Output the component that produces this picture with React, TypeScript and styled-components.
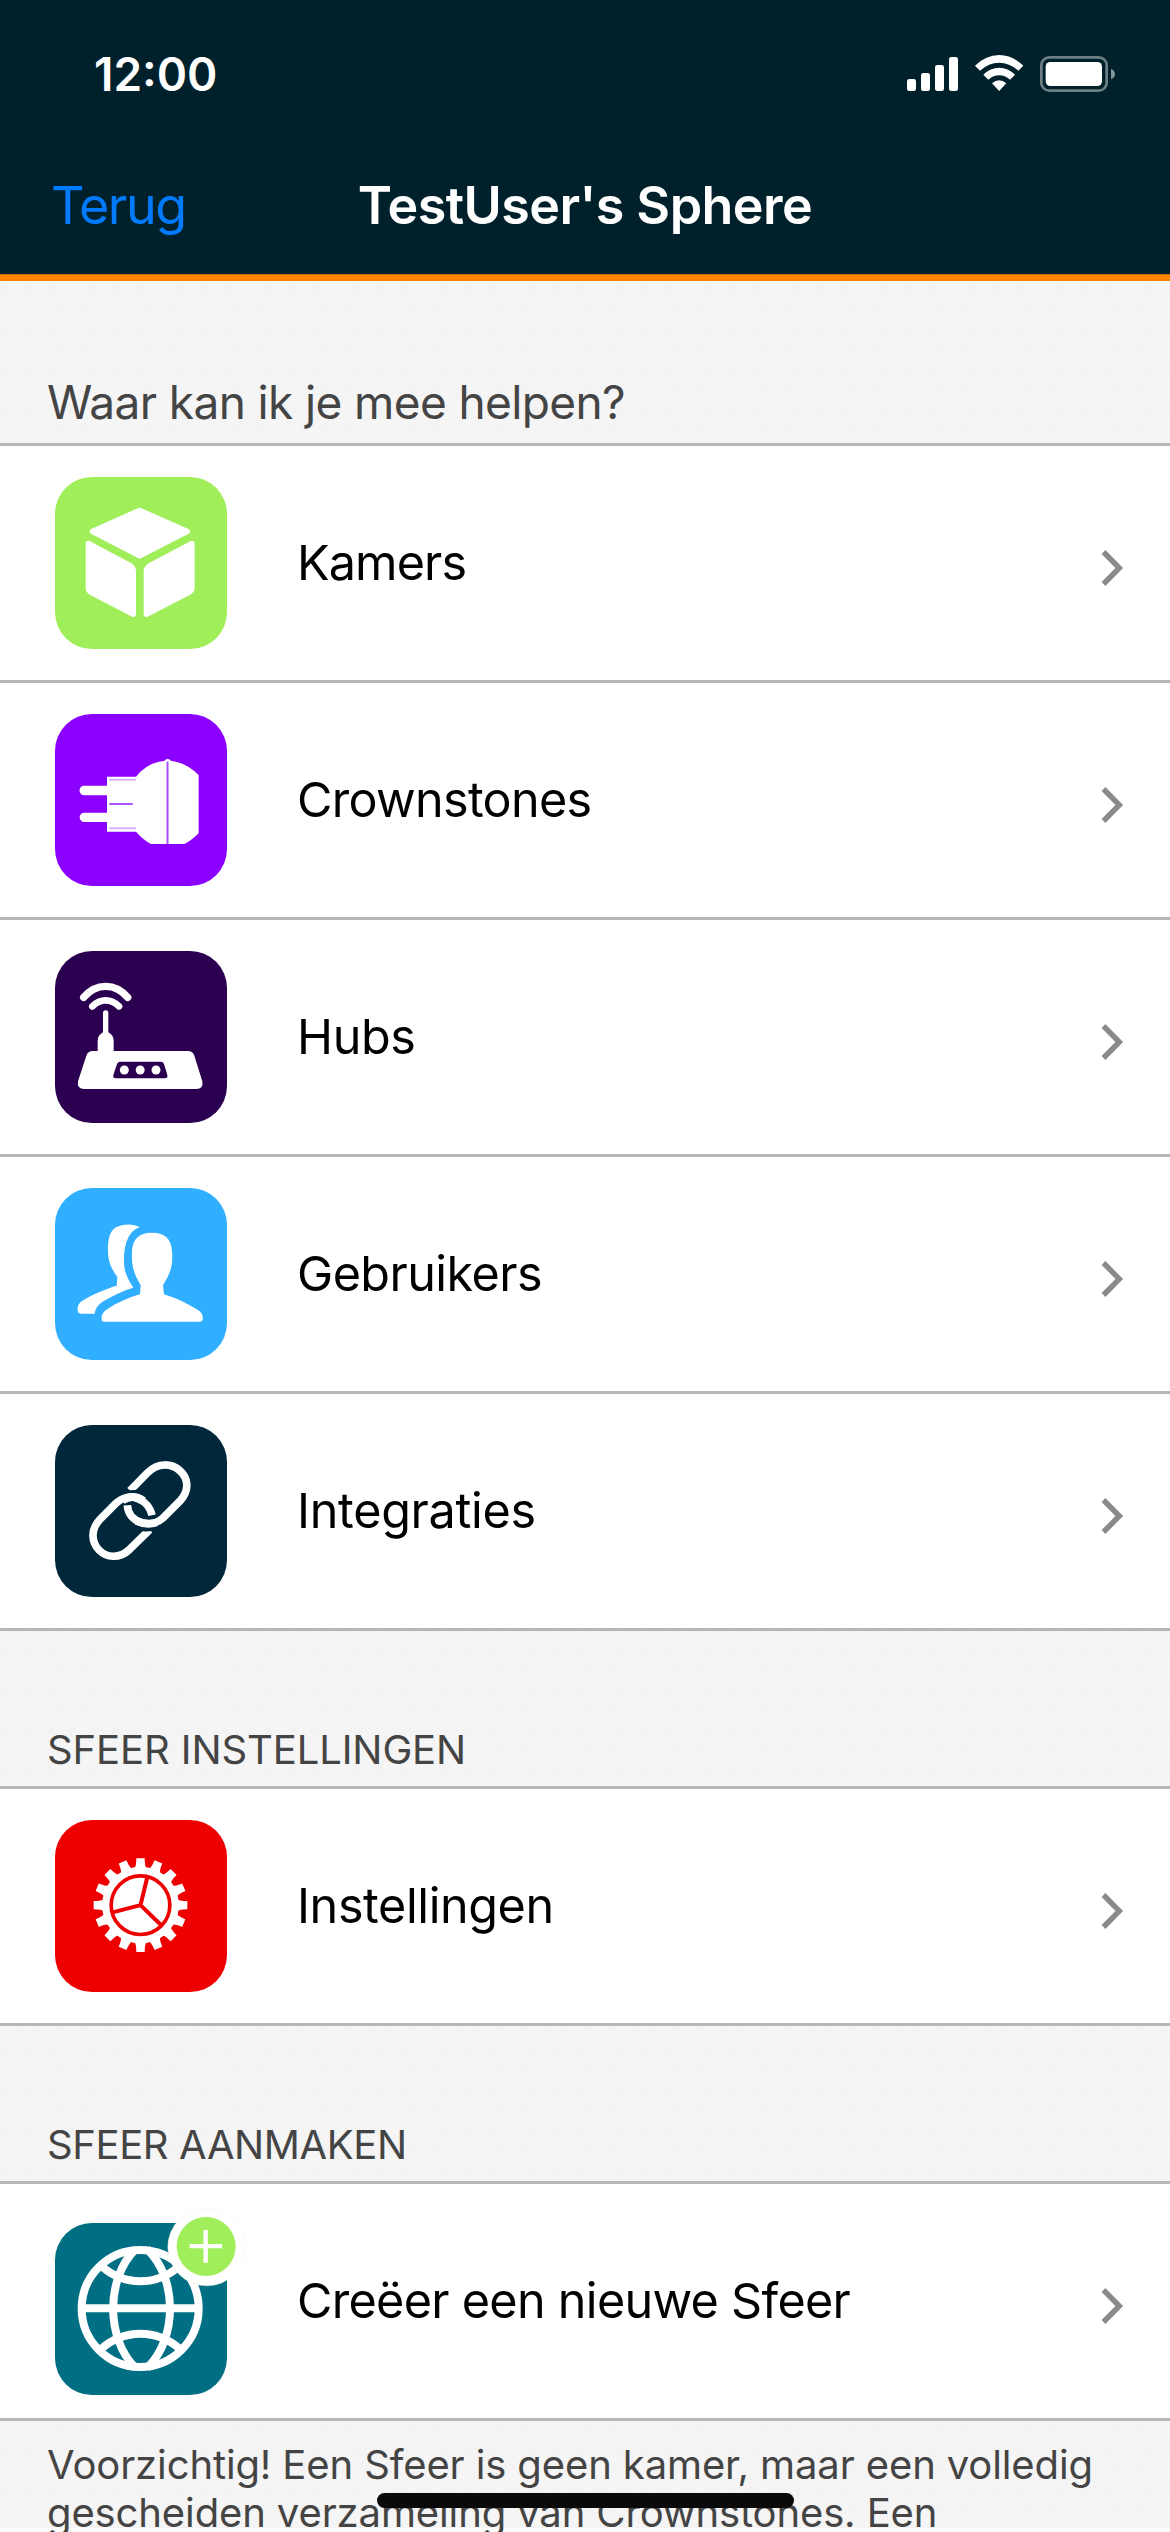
import React from "react";
import styled, { createGlobalStyle } from "styled-components";

const GlobalStyle = createGlobalStyle`
  *, *::before, *::after { box-sizing: border-box; }
  html, body { margin: 0; padding: 0; background: #f5f5f5; }
`;

const Screen = styled.div`
  position: relative;
  display: flex;
  flex-direction: column;
  width: 1170px;
  height: 2532px;
  overflow: hidden;
  font-family: Inter, "Liberation Sans", sans-serif;
  color: #000;
  background-color: #f5f5f5;
  background-image:
    linear-gradient(#fcfcfc, #fcfcfc),
    radial-gradient(ellipse 6px 7px at 6px 10px, #f3f3f3 50%, transparent),
    radial-gradient(ellipse 6px 7px at 17px 30px, #f3f3f3 50%, transparent);
  background-size: 100% 4px, 22px 40px, 22px 40px;
  background-position: 0 100%, 0 0, 0 0;
  background-repeat: no-repeat, repeat, repeat;
`;

const Header = styled.header`
  flex: none;
  display: flex;
  flex-direction: column;
  height: 281px;
  background: #00212b;
  border-bottom: 6px solid #ff8500;
  box-shadow: inset 0 -1px 0 #d27000;
`;

const StatusBar = styled.div`
  display: flex;
  align-items: center;
  justify-content: space-between;
  height: 148px;
  padding: 0 52px 0 94px;
`;

const Clock = styled.span`
  color: #fff;
  font-size: 46px;
  font-weight: 600;
  line-height: 60px;
`;

const NavBar = styled.nav`
  display: grid;
  grid-template-columns: 300px 1fr 300px;
  align-items: center;
  height: 116px;
`;

const BackButton = styled.button`
  border: 0;
  padding: 0 0 0 51px;
  background: none;
  text-align: left;
  color: #007aff;
  font: 400 52px/64px Inter, "Liberation Sans", sans-serif;
  letter-spacing: -1.5px;
`;

const Title = styled.h1`
  margin: 0;
  text-align: center;
  color: #fff;
  font-size: 52px;
  font-weight: 600;
  line-height: 64px;
  letter-spacing: -0.53px;
  white-space: nowrap;
`;

const SectionHeader = styled.h2<{ $large?: boolean; $tracking: number }>`
  flex: none;
  display: flex;
  align-items: flex-end;
  height: ${(p) => (p.$large ? 162 : 155)}px;
  margin: 0;
  padding: 0 47px ${(p) => (p.$large ? 11 : 6)}px;
  color: #444;
  font-size: ${(p) => (p.$large ? 46 : 40)}px;
  font-weight: 400;
  line-height: 60px;
  letter-spacing: ${(p) => p.$tracking}px;
`;

const List = styled.ul`
  flex: none;
  margin: 0;
  padding: 0;
  list-style: none;
  border-top: 3px solid #b7b7b7;
`;

const Row = styled.li`
  display: flex;
  align-items: center;
  height: 237px;
  padding: 0 44px 0 55px;
  background: #fff;
  border-bottom: 3px solid #b7b7b7;
`;

const Tile = styled.span<{ $color: string; $lowered?: boolean }>`
  flex: none;
  width: 172px;
  height: 172px;
  margin-top: ${(p) => (p.$lowered ? 16 : 0)}px;
  border-radius: 37px;
  background: ${(p) => p.$color};

  svg {
    display: block;
    width: 172px;
    height: 172px;
    overflow: visible;
  }
`;

const Label = styled.span<{ $tracking: number }>`
  flex: 1;
  padding-left: 70px;
  font-size: 48.5px;
  line-height: 60px;
  letter-spacing: ${(p) => p.$tracking}px;
`;

const Chevron = styled.svg`
  flex: none;
  width: 26px;
  height: 42px;
  margin-top: 10px;
`;

const Footnote = styled.p`
  margin: 0;
  padding: 20px 40px 0 47px;
  color: #444;
  font-size: 40px;
  line-height: 48px;
  letter-spacing: -0.12px;
  white-space: nowrap;
`;

const HomeIndicator = styled.div`
  position: absolute;
  left: 377px;
  top: 2493px;
  width: 417px;
  height: 15px;
  border-radius: 8px;
  background: #0a0a0a;
`;

const StatusIcons = () => (
  <svg width="212" height="40" viewBox="138 72 636 120" fill="#fff">
    <rect x="141" y="147" width="27" height="36" rx="7" />
    <rect x="183" y="129" width="27" height="54" rx="7" />
    <rect x="225" y="105" width="27" height="78" rx="7" />
    <rect x="267" y="81" width="27" height="102" rx="7" />
    <path d="M345 107Q378 75 417.500 75T490 107L475 122Q449 98 417.500 98T360 122Z" />
    <path d="M370 134Q391 113 417.500 113T465 134L450 149Q435 136 417.500 136T385 149Z" />
    <path d="M396 160Q417.500 142 439 160L417.500 183Z" />
    <rect x="544" y="82" width="196" height="100" rx="24" fill="none" stroke="#6b7f85" strokeWidth="8" />
    <rect x="557" y="96" width="169" height="72" rx="14" />
    <path d="M753 116q12 5 12 16t-12 16z" fill="#80939a" />
  </svg>
);

const RoomsIcon = () => (
  <svg viewBox="46 51 516 516" fill="#fff" stroke="#fff" strokeWidth="16" strokeLinejoin="round">
    <path d="M300 151L443 214L300 288L158 214Z" />
    <path d="M146 250L270 316Q281 323 281 334V463L154 397Q146 392 146 384Z" />
    <path d="M457 250L332 316Q320 323 320 334V463L448 397Q457 392 457 384Z" />
  </svg>
);

const PlugIcon = () => (
  <svg viewBox="46 42 516 516" fill="#fff">
    <path d="M202 230H289Q323 187 375 182Q376 177 384 177T393 182Q438 187 477 225V400Q455 422 434 432H334Q310 419 289 395H202V366H134A14 14 0 0 1 134 338H202V286H134A14 14 0 0 1 134 257H202Z" />
    <path d="M383.500 185V432" stroke="#a84dff" strokeWidth="6" />
    <path d="M209 312H279" stroke="#ac55ff" strokeWidth="6" />
    <path d="M209 239.500H289M209 385H289" stroke="#d8b0ff" strokeWidth="6" />
  </svg>
);

const HubIcon = () => (
  <svg viewBox="46 33 516 516" fill="#fff">
    <g fill="none" stroke="#fff" strokeLinecap="round">
      <path d="M132 172Q160 139 198 139T264 172" strokeWidth="22" />
      <path d="M158 199Q176 181 198 181T238 199" strokeWidth="20" />
      <path d="M198 219V290" strokeWidth="16" />
    </g>
    <path d="M174 333V302Q174 286 190 277H206Q222 286 222 302V333H445Q459 333 464 347L488 424Q492 447 470 447H134Q111 447 115 424L140 347Q145 333 159 333Z" />
    <path d="M242 365H363Q371 365 373 372L383 405Q385 415 375 415H228Q219 415 221 405L232 372Q235 365 242 365Z" fill="#2b0050" />
    <circle cx="254" cy="390" r="13.500" />
    <circle cx="301.500" cy="390" r="13.500" />
    <circle cx="349" cy="390" r="13.500" />
  </svg>
);

const UsersIcon = () => (
  <svg viewBox="46 54 516 516" fill="#fff">
    <path d="M337 188C374 188 395 204 397 244C401 293 389 313 370 346L373 373C407 383 446 402 475 420C489 430 490 439 489 449Q488 455 480 455H194Q187 455 186 449C185 438 187 429 200 419C230 399 266 383 301 373L303 346C283 310 275 291 277 244C279 205 300 188 337 188Z" />
    <path d="M300 172C282 160 249 161 229 172C209 184 204 211 205 246C206 275 214 294 233 321L231 347C196 357 158 374 128 392C114 401 112 412 115 426Q117 431 125 431H165C168 412 177 402 194 392C220 376 250 362 281 353C263 325 252 305 253 266C253 217 270 181 300 172Z" />
  </svg>
);

const LinkIcon = () => (
  <svg viewBox="46 45 516 516" fill="none" stroke="#fff" strokeWidth="23">
    <path d="M337 316C328 270 270 240 229 280L181 328C120 393 205 479 270 418L330 359" />
    <path d="M271 242L324 188C387 124 485 206 420 274L370 324C335 356 266 340 263 286" />
    <path d="M250 239Q275 244 302 237L300 249H250ZM300 363Q325 366 350 361V351H300Z" fill="#00283a" stroke="none" />
    <path d="M248 272Q279 250 312 272" strokeWidth="23" />
    <path d="M290 333Q320 347 350 338" strokeWidth="23" />
  </svg>
);

const TEETH = Array.from({ length: 16 }, (_, i) => i * 22.5);

const GearIcon = () => (
  <svg viewBox="46 45 516 516" fill="#fff">
    {TEETH.map((angle) => (
      <path key={angle} d="M284 191Q290 184 290 160H315Q315 184 321 191Z" transform={`rotate(${angle} 302.500 300.500)`} />
    ))}
    <circle cx="302.500" cy="300.500" r="115" />
    <circle cx="302.500" cy="300.500" r="88" fill="none" stroke="#ee0000" strokeWidth="11" />
    <path d="M302.500 300.500L323 216M302.500 300.500L219 322M302.500 300.500L364 360" stroke="#ee0000" strokeWidth="12" />
  </svg>
);

const GlobeIcon = () => (
  <svg viewBox="46 69 516 516" fill="none" stroke="#fff" strokeWidth="24">
    <circle cx="301.500" cy="325.500" r="175.500" />
    <path d="M126 325H477" />
    <path d="M288 147C198 234 198 417 288 504" />
    <path d="M322 147C414 234 414 417 322 504" />
    <path d="M185 198C254 259 350 259 420 198" />
    <path d="M185 446C254 386 350 386 420 446" />
    <circle cx="501" cy="141" r="116.500" fill="#fff" stroke="#eafbdc" strokeWidth="1.500" />
    <circle cx="499.500" cy="139.500" r="88.500" fill="#a1ee5b" stroke="none" />
    <path d="M450 138.500H547M498 90V188" strokeWidth="13" />
  </svg>
);

type Item = { label: string; color: string; icon: React.ReactNode; tracking: number; lowered?: boolean };

const helpItems: Item[] = [
  { label: "Kamers", color: "#a1ee5b", icon: <RoomsIcon />, tracking: -0.87 },
  { label: "Crownstones", color: "#8b00ff", icon: <PlugIcon />, tracking: -0.69 },
  { label: "Hubs", color: "#2b0050", icon: <HubIcon />, tracking: -0.4 },
  { label: "Gebruikers", color: "#30aeff", icon: <UsersIcon />, tracking: -0.55 },
  { label: "Integraties", color: "#00283a", icon: <LinkIcon />, tracking: -0.3 },
];

const settingsItems: Item[] = [
  { label: "Instellingen", color: "#ee0000", icon: <GearIcon />, tracking: -0.4 },
];

const createItems: Item[] = [
  { label: "Creëer een nieuwe Sfeer", color: "#006f84", icon: <GlobeIcon />, tracking: -0.69, lowered: true },
];

const MenuList = ({ items }: { items: Item[] }) => (
  <List>
    {items.map((item) => (
      <Row key={item.label}>
        <Tile $color={item.color} $lowered={item.lowered}>{item.icon}</Tile>
        <Label $tracking={item.tracking}>{item.label}</Label>
        <Chevron viewBox="0 0 26 42" fill="none" stroke="#8a8a8a" strokeWidth="5.400">
          <path d="M3.500 5L19.300 21L3.500 37" />
        </Chevron>
      </Row>
    ))}
  </List>
);

export default function App() {
  return (
    <>
      <GlobalStyle />
      <Screen>
        <Header>
          <StatusBar>
            <Clock>12:00</Clock>
            <StatusIcons />
          </StatusBar>
          <NavBar>
            <BackButton>Terug</BackButton>
            <Title>TestUser's Sphere</Title>
          </NavBar>
        </Header>
        <SectionHeader $large $tracking={-0.62}>Waar kan ik je mee helpen?</SectionHeader>
        <MenuList items={helpItems} />
        <SectionHeader $tracking={-0.1}>SFEER INSTELLINGEN</SectionHeader>
        <MenuList items={settingsItems} />
        <SectionHeader $tracking={-0.38}>SFEER AANMAKEN</SectionHeader>
        <MenuList items={createItems} />
        <Footnote>
          Voorzichtig! Een Sfeer is geen kamer, maar een volledig
          <br />
          gescheiden verzameling van Crownstones. Een
        </Footnote>
        <HomeIndicator />
      </Screen>
    </>
  );
}
